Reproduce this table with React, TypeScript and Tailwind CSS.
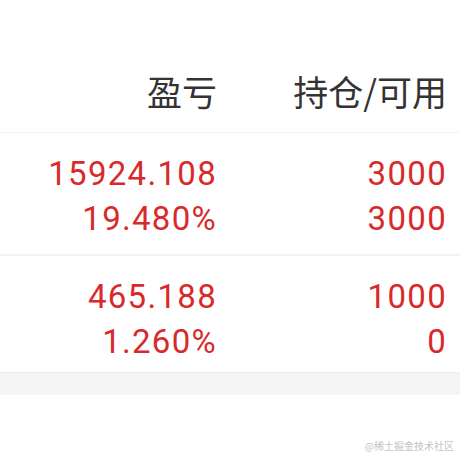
const rows = [
  { pl: '15924.108', pct: '19.480%', hold: '3000', avail: '3000' },
  { pl: '465.188', pct: '1.260%', hold: '1000', avail: '0' },
];

const App = () => {
  return (
    <div className="w-[460px] h-[460px] bg-white flex flex-col overflow-hidden font-['Roboto','Noto_Sans_CJK_SC',sans-serif]">
      {/* header */}
      <div className="flex h-[133px] pt-[73px] border-b border-[#f2f2f2] text-[#333333] text-[35px] leading-[36px] font-['Noto_Sans_CJK_SC',sans-serif]">
        <div className="w-[217px] text-right">盈亏</div>
        <div className="w-[230px] text-right">持仓/可用</div>
      </div>

      {rows.map((r, i) => (
        <div
          key={i}
          className={`flex text-[#d82a2a] text-[33px] leading-[45px] tracking-[1.3px] ${
            i === 0 ? 'pt-[18px] pb-[13px] border-b-2 border-[#f2f2f2]' : 'pt-[18px] pb-[8px]'
          }`}
        >
          <div className="w-[217px] flex flex-col items-end">
            <span>{r.pl}</span>
            <span>{r.pct}</span>
          </div>
          <div className="w-[230px] flex flex-col items-end">
            <span>{r.hold}</span>
            <span>{r.avail}</span>
          </div>
        </div>
      ))}

      <div className="h-[23px] bg-[#f5f5f5] border-t border-[#ececec]" />

      <div className="flex-1 flex items-end justify-end pr-[6px] pb-[7px]">
        <span className="text-[10px] text-[#c4c4c4] font-['Noto_Sans_CJK_SC',sans-serif]">@稀土掘金技术社区</span>
      </div>
    </div>
  );
};

export default App;
